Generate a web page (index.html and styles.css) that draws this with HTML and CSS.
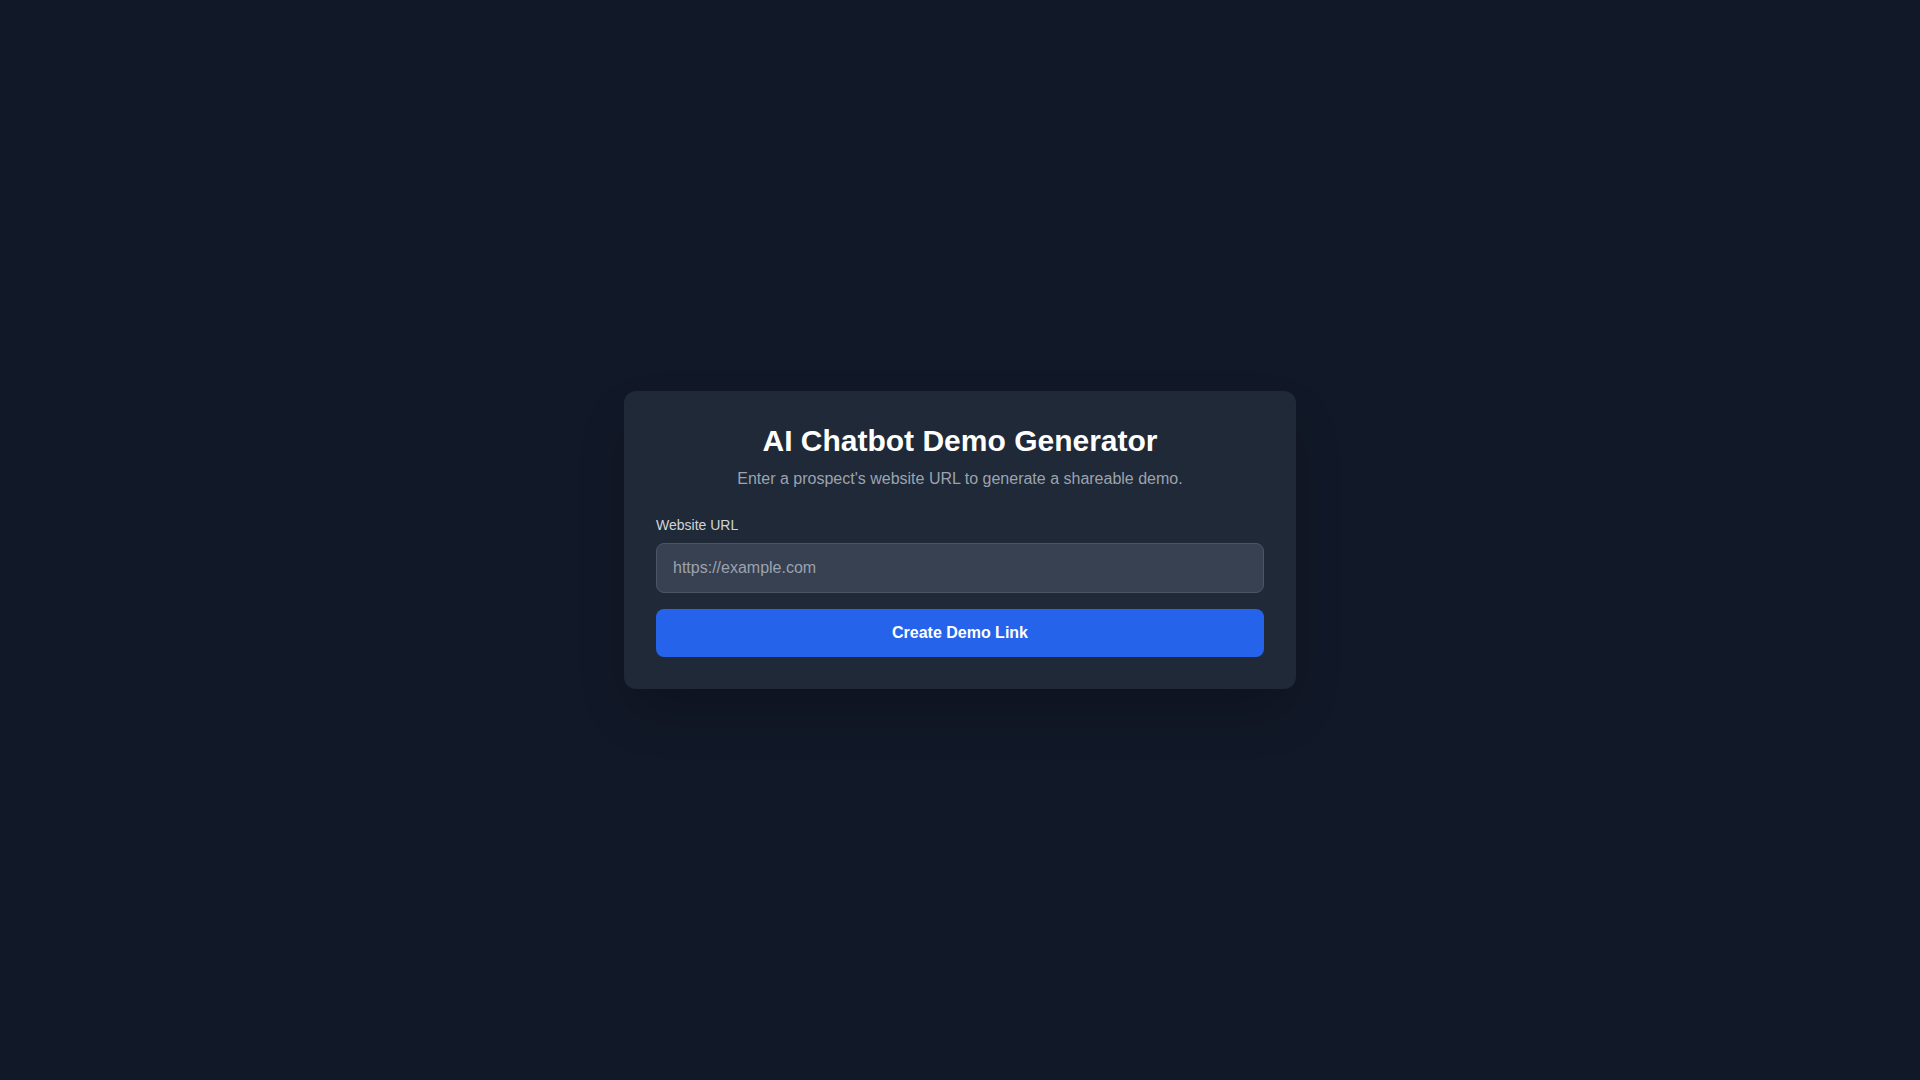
FILE: index.html
```html
<!DOCTYPE html>
<html lang="en">
<head>
<meta charset="utf-8">
<title>AI Chatbot Demo Generator</title>
<link rel="stylesheet" href="styles.css">
</head>
<body>
<main class="page">
  <div class="card">
    <h1 class="title">AI Chatbot Demo Generator</h1>
    <p class="subtitle">Enter a prospect's website URL to generate a shareable demo.</p>
    <form class="form">
      <div class="field">
        <label class="label" for="url">Website URL</label>
        <input class="input" id="url" type="url" placeholder="https://example.com">
      </div>
      <button class="button" type="button">Create Demo Link</button>
    </form>
  </div>
</main>
</body>
</html>
```

FILE: styles.css
```css
* { box-sizing: border-box; }
html, body { margin: 0; padding: 0; height: 100%; }
body {
  background: #111827;
  font-family: "Liberation Sans", Arial, sans-serif;
  color: #f3f4f6;
}
.page {
  min-height: 100vh;
  display: flex;
  align-items: center;
  justify-content: center;
}
.card {
  width: 672px;
  background: #1f2937;
  border-radius: 12px;
  padding: 32px;
  box-shadow: 0 25px 50px -12px rgba(0,0,0,0.25);
}
.title {
  margin: 0 0 8px;
  font-size: 30px;
  line-height: 36px;
  font-weight: 700;
  text-align: center;
  color: #ffffff;
}
.subtitle {
  margin: 0 0 24px;
  font-size: 16px;
  line-height: 24px;
  text-align: center;
  color: #9ca3af;
}
.form {
  display: flex;
  flex-direction: column;
  gap: 16px;
}
.field { display: flex; flex-direction: column; }
.label {
  font-size: 14px;
  line-height: 20px;
  color: #d1d5db;
  margin-bottom: 8px;
}
.input {
  width: 100%;
  height: 50px;
  padding: 12px 16px;
  font-family: inherit;
  font-size: 16px;
  line-height: 24px;
  color: #ffffff;
  background: #374151;
  border: 1px solid #4b5563;
  border-radius: 8px;
  outline: none;
}
.input::placeholder { color: #9ca3af; }
.button {
  width: 100%;
  height: 48px;
  padding: 12px 16px;
  font-family: inherit;
  font-size: 16px;
  line-height: 24px;
  font-weight: 700;
  color: #ffffff;
  background: #2563eb;
  border: none;
  border-radius: 8px;
  cursor: pointer;
}
```
